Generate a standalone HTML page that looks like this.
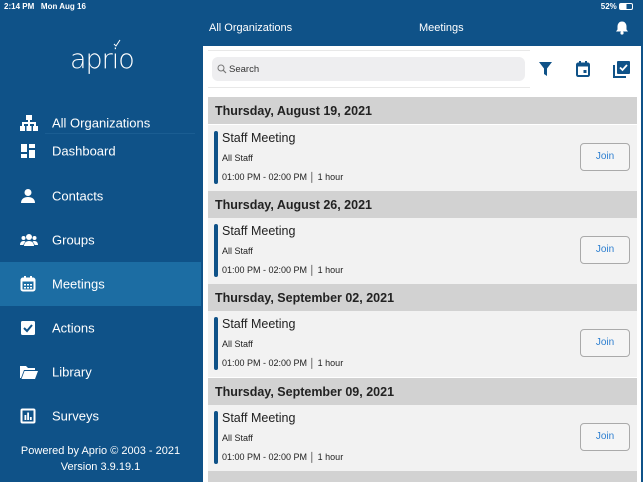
<!DOCTYPE html>
<html><head><meta charset="utf-8"><style>
*{margin:0;padding:0;box-sizing:border-box}
body{width:643px;height:482px;overflow:hidden;font-family:"Liberation Sans",Arial,sans-serif;background:#fff;position:relative}
.a{position:absolute}
#side{left:0;top:0;width:201px;height:482px;background:#0f5288}
.it{position:absolute;left:0;width:201px;height:44px;color:#fff;font-size:13px}
.it span{position:absolute;left:52px;top:50%;transform:translateY(-50%)}
.it svg{position:absolute;left:20px;top:50%;transform:translateY(-50%)}
.hd{position:absolute;left:208px;width:429px;height:27px;background:#d2d2d2;font-size:12.5px;font-weight:bold;color:#222;padding:7px 0 0 7px}
.cd{position:absolute;left:208px;width:429px;height:66px;background:#f2f2f2}
.bar{position:absolute;left:6px;top:6px;width:4px;height:53px;background:#0f5288;border-radius:2px}
.t1{position:absolute;left:14px;top:6px;font-size:12.5px;color:#222}
.t2{position:absolute;left:14px;top:28px;font-size:9px;color:#222}
.t3{position:absolute;left:14px;top:47px;font-size:9px;color:#222}
.jb{position:absolute;left:372px;top:18px;width:50px;height:28px;border:1px solid #aaa;border-radius:4px;background:#f5f5f5;color:#2d7fd0;font-size:10px;text-align:center;line-height:26px}
</style></head><body>
<div id="side" class="a">
<div class="a" style="left:4px;top:2px;color:#fff;font-size:8px;font-weight:bold">2:14 PM&nbsp;&nbsp; Mon Aug 16</div>
<div class="a" style="left:70px;top:44px;color:#fff;font-size:27px;font-weight:300;letter-spacing:-1px;font-family:'DejaVu Sans','Liberation Sans',sans-serif">aprio</div>
<svg class="a" style="left:113px;top:39px" width="8" height="8" viewBox="0 0 8 8"><path d="M1 5l2 2 4-6" fill="none" stroke="#fff" stroke-width="1"/></svg>
<div class="a" style="left:45px;top:133px;width:150px;height:1px;background:#1a5d92"></div>
<div class="it" style="top:101px"><svg width="18" height="16" viewBox="0 0 18 16" fill="#fff"><rect x="6" y="0" width="6" height="5"/><rect x="8" y="5" width="2" height="3"/><rect x="2" y="7" width="14" height="2"/><rect x="2" y="8" width="2" height="3"/><rect x="8" y="8" width="2" height="3"/><rect x="14" y="8" width="2" height="3"/><rect x="0" y="11" width="5" height="5"/><rect x="6.5" y="11" width="5" height="5"/><rect x="13" y="11" width="5" height="5"/></svg><span>All Organizations</span></div>
<div class="it" style="top:129px"><svg width="16" height="16" viewBox="0 0 16 16" fill="#fff"><rect x="1" y="1" width="6" height="8"/><rect x="9" y="1" width="6" height="4"/><rect x="1" y="11" width="6" height="4"/><rect x="9" y="7" width="6" height="8"/></svg><span>Dashboard</span></div>
<div class="it" style="top:174px"><svg width="16" height="16" viewBox="0 0 16 16" fill="#fff"><circle cx="8" cy="4.5" r="3.5"/><path d="M1 15c0-4 3-6 7-6s7 2 7 6z"/></svg><span>Contacts</span></div>
<div class="it" style="top:218px"><svg width="18" height="14" viewBox="0 0 18 14" fill="#fff"><circle cx="9" cy="4" r="3"/><circle cx="3.5" cy="5" r="2"/><circle cx="14.5" cy="5" r="2"/><path d="M4 13c0-3 2-5 5-5s5 2 5 5z"/><path d="M0 12c0-2 1-4 3.5-4 1 0 1.5.3 2 .6C4 10 3.5 11 3.5 12z"/><path d="M18 12c0-2-1-4-3.5-4-1 0-1.5.3-2 .6C14 10 14.5 11 14.5 12z"/></svg><span>Groups</span></div>
<div class="it" style="top:262px;background:#1c6da3"><svg width="16" height="16" viewBox="0 0 16 16"><rect x="1.5" y="2.5" width="13" height="12" rx="1.5" fill="none" stroke="#fff" stroke-width="2"/><rect x="1.5" y="2.5" width="13" height="3" fill="#fff"/><rect x="4" y="0" width="2" height="3" fill="#fff"/><rect x="10" y="0" width="2" height="3" fill="#fff"/><g fill="#fff"><rect x="4" y="8" width="2" height="1.5"/><rect x="7" y="8" width="2" height="1.5"/><rect x="10" y="8" width="2" height="1.5"/><rect x="4" y="11" width="2" height="1.5"/><rect x="7" y="11" width="2" height="1.5"/><rect x="10" y="11" width="2" height="1.5"/></g></svg><span>Meetings</span></div>
<div class="it" style="top:306px"><svg width="16" height="16" viewBox="0 0 16 16"><rect x="1" y="1" width="14" height="14" rx="1.5" fill="#fff"/><path d="M4 8l3 3 5-6" fill="none" stroke="#0f5288" stroke-width="2"/></svg><span>Actions</span></div>
<div class="it" style="top:350px"><svg width="18" height="14" viewBox="0 0 18 14" fill="#fff"><path d="M0 1h6l2 2h7v2H4L1 13H0z"/><path d="M4.5 6H18l-3 8H1.5z"/></svg><span>Library</span></div>
<div class="it" style="top:394px"><svg width="16" height="16" viewBox="0 0 16 16"><rect x="1.5" y="1.5" width="13" height="13" rx="1" fill="none" stroke="#fff" stroke-width="2"/><rect x="4.5" y="7" width="1.8" height="5" fill="#fff"/><rect x="7.2" y="4.5" width="1.8" height="7.5" fill="#fff"/><rect x="9.9" y="9" width="1.8" height="3" fill="#fff"/></svg><span>Surveys</span></div>
<div class="a" style="left:0;width:201px;top:443px;text-align:center;color:#fff;font-size:11px;line-height:16px">Powered by Aprio © 2003 - 2021<br>Version 3.9.19.1</div>
</div>
<div class="a" style="left:201px;top:0;width:442px;height:46px;background:#0f5288;color:#fff">
<div class="a" style="right:10px;top:2px;font-size:8px;font-weight:bold">52% <span style="display:inline-block;width:14px;height:7px;border:1px solid #fff;border-radius:2px;vertical-align:-1px;background:linear-gradient(90deg,#fff 55%,transparent 55%)"></span></div>
<div class="a" style="left:8px;top:22px;font-size:11px">All Organizations</div>
<div class="a" style="left:218px;top:22px;font-size:11px">Meetings</div>
<svg class="a" style="left:414px;top:21px" width="14" height="14" viewBox="0 0 14 14" fill="#fff"><path d="M7 0.5c-3 0-4.5 2.5-4.5 5v3L1 10.5h12L11.5 8.5v-3C11.5 3 10 0.5 7 0.5z"/><circle cx="7" cy="12" r="1.6"/></svg>
</div>
<div class="a" style="left:201px;top:46px;width:2px;height:436px;background:#0f5288"></div>
<div class="a" style="left:641px;top:46px;width:2px;height:436px;background:#0f5288"></div>
<div class="a" style="left:208px;top:50px;width:322px;height:1px;background:#e8e8e8"></div>
<div class="a" style="left:208px;top:87px;width:322px;height:1px;background:#e8e8e8"></div>
<div class="a" style="left:212px;top:57px;width:313px;height:24px;background:#eeeef0;border-radius:6px"></div>
<svg class="a" style="left:217px;top:64px" width="10" height="10" viewBox="0 0 10 10"><circle cx="4" cy="4" r="3" fill="none" stroke="#777" stroke-width="1"/><path d="M6.2 6.2L9 9" stroke="#777" stroke-width="1.2"/></svg>
<div class="a" style="left:229px;top:64px;font-size:9.5px;color:#333">Search</div>
<svg class="a" style="left:539px;top:62px" width="13" height="14" viewBox="0 0 13 14" fill="#0f5288"><path d="M0 0h13L8 6.5V14l-3-2V6.5z"/></svg>
<svg class="a" style="left:576px;top:61px" width="14" height="16" viewBox="0 0 14 16"><rect x="1" y="2.5" width="12" height="12.5" rx="1.2" fill="none" stroke="#0f5288" stroke-width="2"/><rect x="1" y="2.5" width="12" height="3" fill="#0f5288"/><rect x="3" y="0" width="2" height="3" fill="#0f5288"/><rect x="9" y="0" width="2" height="3" fill="#0f5288"/><rect x="7.5" y="9" width="3" height="3" fill="#0f5288"/></svg>
<svg class="a" style="left:613px;top:61px" width="17" height="17" viewBox="0 0 17 17"><path d="M1 4v12h12" fill="none" stroke="#0f5288" stroke-width="2"/><rect x="4" y="0" width="13" height="13" rx="1" fill="#0f5288"/><path d="M7 6.5l2.5 2.5 4.5-5" fill="none" stroke="#fff" stroke-width="1.8"/></svg>

<div class="hd" style="top:97px">Thursday, August 19, 2021</div>
<div class="cd" style="top:125px"><div class="bar"></div><div class="t1">Staff Meeting</div><div class="t2">All Staff</div><div class="t3">01:00 PM - 02:00 PM │ 1 hour</div><div class="jb">Join</div></div>
<div class="hd" style="top:191px">Thursday, August 26, 2021</div>
<div class="cd" style="top:218px"><div class="bar"></div><div class="t1">Staff Meeting</div><div class="t2">All Staff</div><div class="t3">01:00 PM - 02:00 PM │ 1 hour</div><div class="jb">Join</div></div>
<div class="hd" style="top:284px">Thursday, September 02, 2021</div>
<div class="cd" style="top:311px"><div class="bar"></div><div class="t1">Staff Meeting</div><div class="t2">All Staff</div><div class="t3">01:00 PM - 02:00 PM │ 1 hour</div><div class="jb">Join</div></div>
<div class="hd" style="top:378px">Thursday, September 09, 2021</div>
<div class="cd" style="top:405px"><div class="bar"></div><div class="t1">Staff Meeting</div><div class="t2">All Staff</div><div class="t3">01:00 PM - 02:00 PM │ 1 hour</div><div class="jb">Join</div></div>
<div class="a" style="left:208px;top:471px;width:429px;height:11px;background:#d2d2d2"></div>
</body></html>
